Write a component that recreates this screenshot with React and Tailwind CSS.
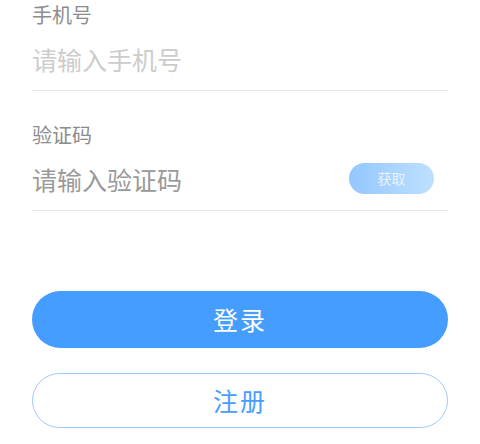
export default function App() {
  return (
    <div
      className="w-[480px] h-[444px] bg-white px-8 pt-[1px] overflow-hidden"
      style={{ fontFamily: '"Noto Sans CJK SC", "Noto Sans", sans-serif' }}
    >
      {/* 手机号 */}
      <div className="text-[20px] leading-[28px] text-[#8c8c8c]">手机号</div>
      <div className="h-[62px] flex items-center border-b border-[#e6e6e6]">
        <input
          type="text"
          placeholder="请输入手机号"
          className="w-full text-[25px] outline-none placeholder:text-[#cccccc] bg-transparent"
        />
      </div>

      {/* 验证码 */}
      <div className="mt-[30px] text-[20px] leading-[28px] text-[#8c8c8c]">验证码</div>
      <div className="h-[62px] flex items-center border-b border-[#e6e6e6]">
        <input
          type="text"
          placeholder="请输入验证码"
          className="flex-1 min-w-0 text-[25px] outline-none placeholder:text-[#999999] bg-transparent"
        />
        <button className="mr-[14px] mt-[-2px] w-[85px] h-[31px] rounded-full bg-gradient-to-r from-[#93c7ff] to-[#bfe0ff] text-[14px] text-[#e8f3ff]">
          获取
        </button>
      </div>

      {/* buttons */}
      <button className="mt-[80px] w-full h-[57px] rounded-full bg-[#459dff] text-white text-[25px] tracking-[2px]">
        登录
      </button>
      <button className="mt-[25px] w-full h-[55px] rounded-full border-[1.5px] border-[#9ccaff] text-[#459dff] text-[25px] tracking-[2px]">
        注册
      </button>
    </div>
  );
}
